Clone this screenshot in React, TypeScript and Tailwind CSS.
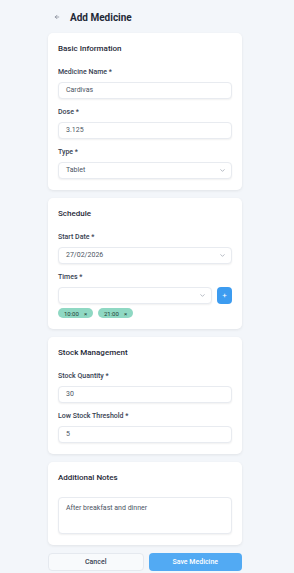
import React from "react";

const Label = ({ children }: { children: React.ReactNode }) => (
  <div className="text-[7px] font-medium text-[#374151] leading-[9px] mb-[5px]">{children}</div>
);

const Input = ({ value }: { value: string }) => (
  <div className="h-[17px] rounded-[4px] border border-[#e8ebf0] bg-white shadow-[0_1px_2px_rgba(0,0,0,0.06)] px-[7px] flex items-center text-[7px] text-[#4b5563]">
    {value}
  </div>
);

const Chevron = () => (
  <svg width="7" height="7" viewBox="0 0 24 24" fill="none" stroke="#9ca3af" strokeWidth="2.5" strokeLinecap="round" strokeLinejoin="round">
    <path d="m6 9 6 6 6-6" />
  </svg>
);

const Select = ({ value }: { value: string }) => (
  <div className="h-[17px] rounded-[4px] border border-[#e8ebf0] bg-white shadow-[0_1px_2px_rgba(0,0,0,0.06)] pl-[7px] pr-[5px] flex items-center justify-between text-[7px] text-[#4b5563]">
    <span>{value}</span>
    <Chevron />
  </div>
);

const Card = ({ title, children }: { title: string; children: React.ReactNode }) => (
  <div className="bg-white rounded-[5px] shadow-[0_1px_3px_rgba(0,0,0,0.08)] px-[10px] pt-[11px] pb-[11px]">
    <div className="text-[8px] font-medium text-[#1f2937] leading-[10px] mb-[14px]">{title}</div>
    {children}
  </div>
);

const Chip = ({ t }: { t: string }) => (
  <div className="h-[10px] w-[35px] rounded-full bg-[#8fd8c3] flex items-center justify-center gap-[5px] text-[6px] text-[#1f3d35]">
    <span>{t}</span>
    <span>×</span>
  </div>
);

export default function App() {
  return (
    <div className="w-[294px] h-[573px] bg-[#f3f6fa] overflow-hidden" style={{ fontFamily: "Roboto, 'Noto Sans', sans-serif" }}>
      <div className="w-[194px] ml-[48px]">
        <div className="h-[33px] flex items-center gap-[10px] pl-[6px] pt-[1px]">
          <svg width="6" height="6" viewBox="0 0 24 24" fill="none" stroke="#6b7280" strokeWidth="2.5" strokeLinecap="round" strokeLinejoin="round">
            <path d="m12 19-7-7 7-7" />
            <path d="M19 12H5" />
          </svg>
          <span className="text-[10px] font-bold text-[#1f2937]">Add Medicine</span>
        </div>

        <div className="flex flex-col gap-[8px]">
          <Card title="Basic Information">
            <Label>Medicine Name *</Label>
            <Input value="Cardivas" />
            <div className="h-[9px]" />
            <Label>Dose *</Label>
            <Input value="3.125" />
            <div className="h-[9px]" />
            <Label>Type *</Label>
            <Select value="Tablet" />
          </Card>

          <Card title="Schedule">
            <Label>Start Date *</Label>
            <Select value="27/02/2026" />
            <div className="h-[9px]" />
            <Label>Times *</Label>
            <div className="flex gap-[5px]">
              <div className="flex-1">
                <Select value="" />
              </div>
              <div className="w-[15px] h-[17px] rounded-[4px] bg-[#3d9cf0] flex items-center justify-center text-white text-[8px] leading-none">+</div>
            </div>
            <div className="flex gap-[5px] mt-[4px]">
              <Chip t="10:00" />
              <Chip t="21:00" />
            </div>
          </Card>

          <Card title="Stock Management">
            <Label>Stock Quantity *</Label>
            <Input value="30" />
            <div className="h-[9px]" />
            <Label>Low Stock Threshold *</Label>
            <Input value="5" />
          </Card>

          <Card title="Additional Notes">
            <div className="h-[37px] rounded-[4px] border border-[#e8ebf0] bg-white shadow-[0_1px_2px_rgba(0,0,0,0.06)] px-[7px] pt-[5px] text-[7px] text-[#4b5563]">
              After breakfast and dinner
            </div>
          </Card>
        </div>

        <div className="flex gap-[5px] mt-[8px]">
          <div className="flex-1 h-[18px] rounded-[4px] border border-[#e5e9ef] bg-[#f8fafc] flex items-center justify-center text-[7px] font-medium text-[#374151]">Cancel</div>
          <div className="flex-1 h-[18px] rounded-[4px] bg-[#52aaf3] flex items-center justify-center text-[7px] font-medium text-white">Save Medicine</div>
        </div>
      </div>
    </div>
  );
}
